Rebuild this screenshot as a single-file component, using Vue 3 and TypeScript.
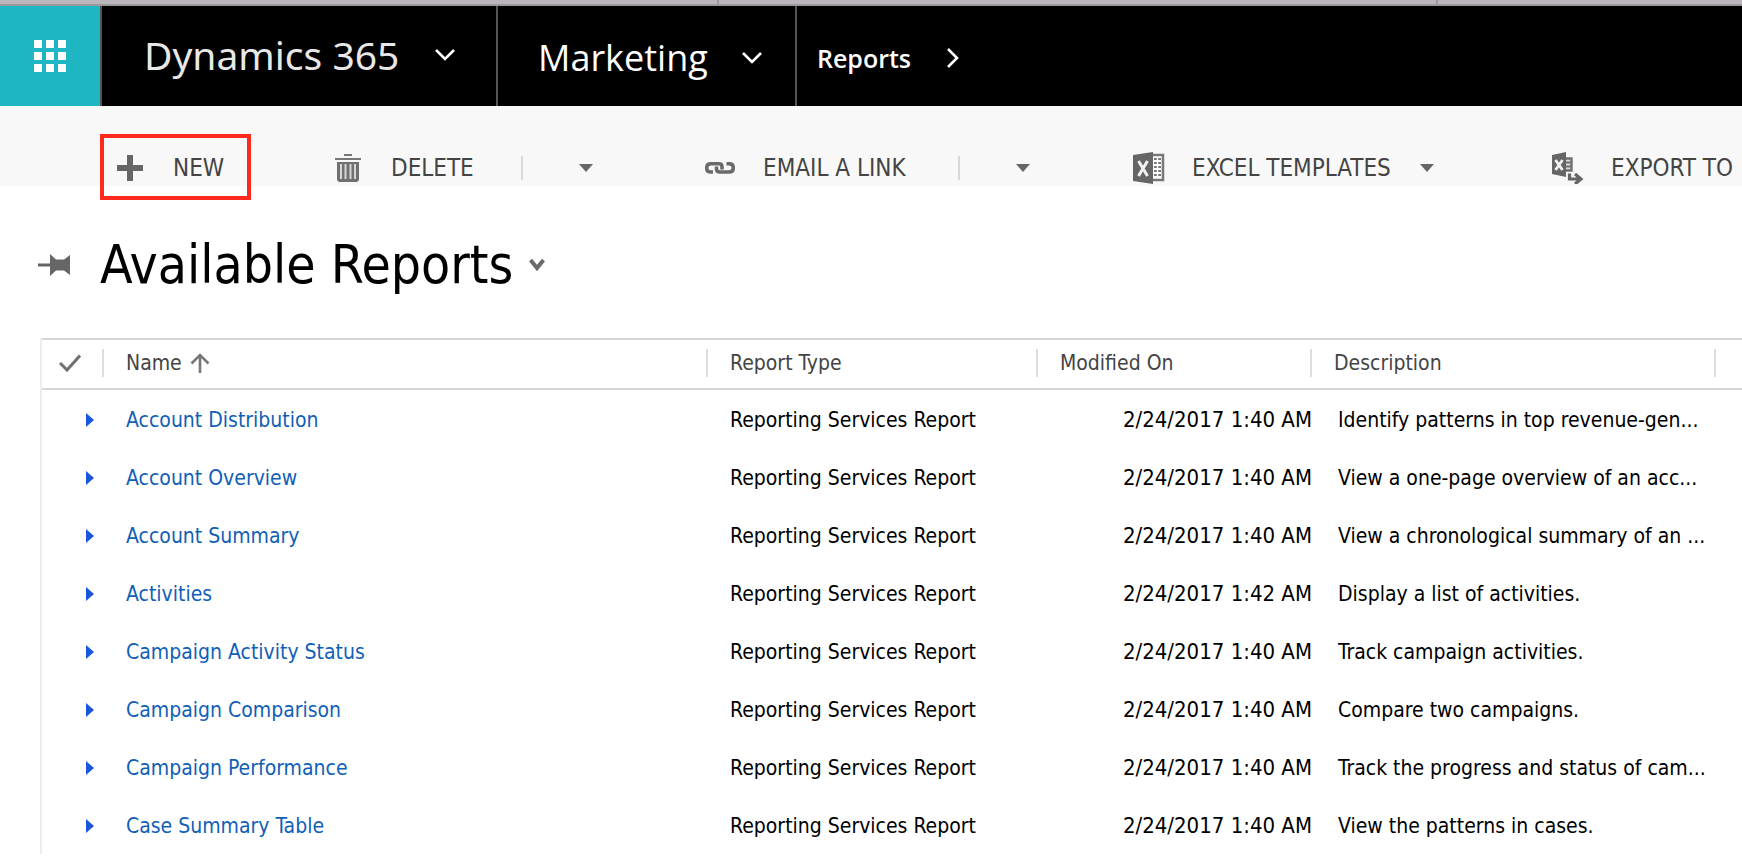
<script setup lang="ts">
interface Report {
  name: string
  type: string
  modified: string
  description: string
}

const serviceType = 'Reporting Services Report'

const reports: Report[] = [
  { name: 'Account Distribution', type: serviceType, modified: '2/24/2017 1:40 AM', description: 'Identify patterns in top revenue-gen...' },
  { name: 'Account Overview', type: serviceType, modified: '2/24/2017 1:40 AM', description: 'View a one-page overview of an acc...' },
  { name: 'Account Summary', type: serviceType, modified: '2/24/2017 1:40 AM', description: 'View a chronological summary of an ...' },
  { name: 'Activities', type: serviceType, modified: '2/24/2017 1:42 AM', description: 'Display a list of activities.' },
  { name: 'Campaign Activity Status', type: serviceType, modified: '2/24/2017 1:40 AM', description: 'Track campaign activities.' },
  { name: 'Campaign Comparison', type: serviceType, modified: '2/24/2017 1:40 AM', description: 'Compare two campaigns.' },
  { name: 'Campaign Performance', type: serviceType, modified: '2/24/2017 1:40 AM', description: 'Track the progress and status of cam...' },
  { name: 'Case Summary Table', type: serviceType, modified: '2/24/2017 1:40 AM', description: 'View the patterns in cases.' },
]
</script>

<template>
  <div class="page">
    <div class="tabstrip"><span></span><span></span></div>

    <header class="navbar">
      <button class="launcher" type="button" aria-label="App launcher">
        <svg width="32" height="32" viewBox="0 0 32 32" fill="#fff">
          <path d="M0 0h8v8H0zM12 0h8v8h-8zM24 0h8v8h-8zM0 12h8v8H0zM12 12h8v8h-8zM24 12h8v8h-8zM0 24h8v8H0zM12 24h8v8h-8zM24 24h8v8h-8z" />
        </svg>
      </button>
      <button class="nav brand" type="button">
        <span>Dynamics 365</span>
        <svg width="20" height="12" viewBox="0 0 20 12" fill="none" stroke="#fff" stroke-width="2.6"><path d="M1 1l9 9 9-9" /></svg>
      </button>
      <button class="nav area" type="button">
        <span>Marketing</span>
        <svg width="20" height="12" viewBox="0 0 20 12" fill="none" stroke="#fff" stroke-width="2.6"><path d="M1 1l9 9 9-9" /></svg>
      </button>
      <button class="nav entity" type="button">
        <span>Reports</span>
        <svg width="12" height="20" viewBox="0 0 12 20" fill="none" stroke="#fff" stroke-width="2.6"><path d="M1 1l9 9-9 9" /></svg>
      </button>
    </header>

    <nav class="commands" aria-label="Commands">
      <div class="group new">
        <button class="command marked" type="button">
          <span class="icon">
            <svg width="26" height="26" viewBox="0 0 26 26" fill="#666"><path d="M10 0h6v10h10v6H16v10h-6V16H0v-6h10z" /></svg>
          </span>
          <span>NEW</span>
        </button>
      </div>

      <div class="group delete">
        <button class="command" type="button">
          <span class="icon">
            <svg width="26" height="28" viewBox="0 0 26 28">
              <path d="M9 0h8v2H9zM0 4h26v2H0z" fill="#777" />
              <path d="M2 8h22v17q0 3-3 3H5q-3 0-3-3z" fill="#707070" />
              <path d="M5 10h2v15H5zM9.500 10h2v15h-2zM14.500 10h2v15h-2zM19 10h2v15h-2z" fill="#d6d6d6" />
            </svg>
          </span>
          <span>DELETE</span>
        </button>
        <button class="more split" type="button" aria-label="More delete options">
          <svg width="14" height="8" viewBox="0 0 14 8" fill="#666"><path d="M0 0h14L7 8z" /></svg>
        </button>
      </div>

      <div class="group email">
        <button class="command" type="button">
          <span class="icon">
            <svg width="30" height="12" viewBox="0 0 30 12" fill="none" stroke="#6a6a6a" stroke-width="3.600">
              <path d="M8 10H6Q1.800 10 1.800 6.500V5.300Q1.800 1.800 6 1.800h8q3 0 3 3v2.700" />
              <path d="M21.500 1.800H24q4.200 0 4.200 3.500v1.200q0 3.500-4.200 3.500h-9q-3.500 0-3.500-3V4.500" />
            </svg>
          </span>
          <span>EMAIL A LINK</span>
        </button>
        <button class="more split" type="button" aria-label="More link options">
          <svg width="14" height="8" viewBox="0 0 14 8" fill="#666"><path d="M0 0h14L7 8z" /></svg>
        </button>
      </div>

      <div class="group excel">
        <button class="command" type="button">
          <span class="icon">
            <svg width="32" height="32" viewBox="0 0 32 32">
              <path d="M19 3h11v25H19" fill="#fff" stroke="#777" stroke-width="2.500" />
              <path d="M0 3l20-3v32L0 29z" fill="#666" />
              <path d="M21 7h7M21 11h7M21 15h7M21 19h7M21 23h7" stroke="#777" stroke-width="2" />
              <path d="M24.500 5v21" stroke="#fff" stroke-width="1.500" />
              <path d="M5.500 9l9 15M14.500 9l-9 15" stroke="#f2f2f2" stroke-width="3" />
            </svg>
          </span>
          <span>EXCEL TEMPLATES</span>
        </button>
        <button class="more" type="button" aria-label="Choose a template">
          <svg width="14" height="8" viewBox="0 0 14 8" fill="#666"><path d="M0 0h14L7 8z" /></svg>
        </button>
      </div>

      <div class="group export">
        <button class="command" type="button">
          <span class="icon">
            <svg width="32" height="32" viewBox="0 0 32 32">
              <path d="M13 6.500h6.500v12H13" fill="#ddd" stroke="#707070" stroke-width="2.400" />
              <path d="M14 10.500h5M14 14.500h5" stroke="#707070" stroke-width="1.800" />
              <path d="M0 3l14-3v25L0 22z" fill="#666" />
              <path d="M3.500 8l7 10M10.500 8l-7 10" stroke="#f2f2f2" stroke-width="2.800" />
              <path d="M17.500 21.500v5.500h10M23 22l6 5-6 5" fill="none" stroke="#666" stroke-width="3.200" />
            </svg>
          </span>
          <span>EXPORT TO</span>
        </button>
      </div>
    </nav>

    <main>
      <div class="heading">
        <button class="pin" type="button" aria-label="Pin view">
          <svg width="32" height="22" viewBox="0 0 32 22" fill="#666"><path d="M0 9.500h12V0l6 5.500h8L32 1v20l-6-4.500h-8L12 22v-9.500H0z" /></svg>
        </button>
        <h1>Available Reports</h1>
        <button class="views" type="button" aria-label="Select a view">
          <svg width="16" height="14" viewBox="0 0 16 14" fill="none" stroke="#6a6a6a" stroke-width="4"><path d="M1.500 2l6.500 8 6.500-8" /></svg>
        </button>
      </div>

      <div class="grid">
        <table>
          <colgroup>
            <col class="c-check" /><col class="c-name" /><col class="c-type" /><col class="c-date" /><col class="c-desc" /><col class="c-rest" />
          </colgroup>
          <thead>
            <tr>
              <th class="check">
                <button type="button" aria-label="Select all">
                  <svg width="22" height="18" viewBox="0 0 22 18" fill="none" stroke="#707070" stroke-width="3"><path d="M1 9l7 7L21 1.500" /></svg>
                </button>
              </th>
              <th>
                <button class="sort" type="button">
                  Name
                  <svg width="20" height="20" viewBox="0 0 20 20" fill="none" stroke="#777" stroke-width="2.600"><path d="M10 20V2M1.500 10.500L10 2l8.500 8.500" /></svg>
                </button>
              </th>
              <th><button class="sort" type="button">Report Type</button></th>
              <th><button class="sort" type="button">Modified On</button></th>
              <th><button class="sort" type="button">Description</button></th>
              <th class="rest"></th>
            </tr>
          </thead>
          <tbody>
            <tr v-for="report in reports" :key="report.name">
              <td class="expand">
                <button type="button" :aria-label="'Expand ' + report.name">
                  <svg width="8" height="14" viewBox="0 0 8 14" fill="#1a56db"><path d="M0 0l8 7-8 7z" /></svg>
                </button>
              </td>
              <td><a href="#">{{ report.name }}</a></td>
              <td>{{ report.type }}</td>
              <td class="date">{{ report.modified }}</td>
              <td class="desc">{{ report.description }}</td>
              <td></td>
            </tr>
          </tbody>
        </table>
      </div>
    </main>
  </div>
</template>

<style>
html,
body {
  background: #fff;
}
</style>

<style scoped>
.page {
  font-family: "DejaVu Sans Condensed", "Noto Sans", sans-serif;
  font-size: 21px;
  color: #000;
}

button {
  display: flex;
  align-items: center;
  padding: 0;
  border: 0;
  background: none;
  color: inherit;
  font: inherit;
  white-space: nowrap;
}

svg {
  display: block;
  flex: none;
}

.tabstrip {
  display: flex;
  height: 4px;
  background: #bab6bb;
  border-bottom: 2px solid #9b999b;
}

.tabstrip span {
  width: 717px;
  border-right: 2px solid #9b999b;
}

.navbar {
  display: flex;
  height: 100px;
  background: #000;
  color: #fff;
}

.launcher {
  width: 100px;
  justify-content: center;
  background: #1fb6c3;
}

.nav {
  box-sizing: border-box;
  border-left: 2px solid #555;
  font-family: "Open Sans", "Noto Sans", sans-serif;
  line-height: 48px;
}

.brand {
  width: 396px;
  padding: 0 41px 2px 42px;
  justify-content: space-between;
  font-family: "Noto Sans", sans-serif;
  font-size: 39px;
  color: #e8e8e8;
}

.area {
  width: 299px;
  padding: 4px 33px 0 40px;
  justify-content: space-between;
  font-size: 36px;
}

.entity {
  padding: 4px 0 0 20px;
  gap: 36px;
  font-size: 25px;
  font-weight: 600;
}

.commands {
  display: flex;
  height: 80px;
  padding-left: 114px;
  background: #f8f8f8;
  color: #444;
  font-size: 24px;
}

.group {
  display: flex;
  flex: none;
  align-items: center;
  height: 32px;
  padding-top: 46px;
}

.group.new { width: 218px; }
.group.delete { width: 372px; }
.group.email { width: 429px; }
.group.excel { width: 419px; }

.command {
  gap: 27px;
  height: 32px;
  line-height: 32px;
}

.icon {
  display: flex;
  width: 32px;
  height: 32px;
  flex: none;
  align-items: center;
  justify-content: center;
}

.marked {
  box-sizing: border-box;
  width: 151px;
  height: 66px;
  margin: -2px 0 0 -14px;
  padding: 2px 10px 0;
  border: 4px solid #ff2a1e;
}

.delete .command { width: 189px; }
.email .command { width: 254px; }
.excel .command { width: 287px; }

.more {
  height: 24px;
}

.split {
  padding-left: 56px;
  border-left: 2px solid #d8d8d8;
}

.heading {
  display: flex;
  align-items: center;
  height: 152px;
  padding: 5px 0 0 38px;
  box-sizing: border-box;
}

.pin {
  width: 62px;
}

h1 {
  margin: 0;
  font-size: 53px;
  font-weight: 400;
  line-height: 64px;
  white-space: nowrap;
}

.views {
  margin-left: 16px;
}

.grid {
  margin-left: 40px;
  border-left: 2px solid #ececec;
}

table {
  width: 100%;
  table-layout: fixed;
  border-collapse: separate;
  border-spacing: 0;
}

.c-check { width: 62px; }
.c-type { width: 330px; }
.c-date { width: 274px; }
.c-desc { width: 404px; }
.c-rest { width: 26px; }

th {
  height: 46px;
  padding: 0 0 2px;
  border-top: 2px solid #d6d6d6;
  border-bottom: 2px solid #d6d6d6;
  font-weight: 400;
  color: #444;
  text-align: left;
}

th > button {
  box-sizing: border-box;
  width: 100%;
  height: 28px;
  padding-left: 22px;
  border-right: 2px solid #dedede;
}

.check > button {
  padding-left: 17px;
}

.sort {
  gap: 8px;
}

td {
  height: 56px;
  padding: 2px 0 0 22px;
  line-height: 28px;
  white-space: nowrap;
}

td.expand {
  padding-left: 44px;
}

td.date {
  padding-left: 0;
  font-size: 22px;
  text-align: right;
}

td.desc {
  padding-left: 26px;
}

a {
  color: #1160b7;
  text-decoration: none;
}
</style>
